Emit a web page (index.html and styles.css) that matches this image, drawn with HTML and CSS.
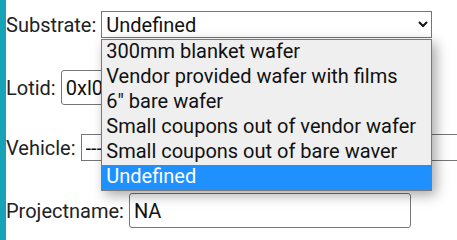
FILE: index.html
```html
<!DOCTYPE html>
<html lang="en">
<head>
<meta charset="utf-8">
<title>Sample form</title>
<link rel="stylesheet" href="styles.css">
</head>
<body>
<div class="page">
  <form class="form">
    <div class="row row-substrate">
      <label class="lbl" for="substrate">Substrate:</label>
      <div class="field">
        <select id="substrate" class="sel sel-substrate">
          <option>Undefined</option>
        </select>
        <ul class="dropdown">
          <li class="opt">300mm blanket wafer</li>
          <li class="opt">Vendor provided wafer with films</li>
          <li class="opt">6" bare wafer</li>
          <li class="opt">Small coupons out of vendor wafer</li>
          <li class="opt">Small coupons out of bare waver</li>
          <li class="opt opt-active">Undefined</li>
        </ul>
      </div>
    </div>
    <div class="row row-lotid">
      <label class="lbl" for="lotid">Lotid:</label>
      <input id="lotid" class="txt txt-lotid" type="text" value="0xl0">
    </div>
    <div class="row row-vehicle">
      <label class="lbl" for="vehicle">Vehicle:</label>
      <select id="vehicle" class="sel sel-vehicle">
        <option>---------</option>
      </select>
    </div>
    <div class="row row-project">
      <label class="lbl" for="project">Projectname:</label>
      <input id="project" class="txt txt-project" type="text" value="NA">
    </div>
  </form>
</div>
</body>
</html>
```

FILE: styles.css
```css
html, body {
  margin: 0;
  padding: 0;
  overflow: hidden;
  background: #ffffff;
}

.page {
  width: 100vw;
  height: 100vh;
  box-sizing: border-box;
  border-left: 6px solid #17a2b8;
  overflow: hidden;
  font-family: Roboto, "Liberation Sans", sans-serif;
  font-size: 20px;
  color: #222222;
}

.form {
  padding-top: 11px;
}

.row {
  display: flex;
  align-items: baseline;
  gap: 5px;
  white-space: nowrap;
}

.row-lotid { margin-top: 32px; }
.row-vehicle { margin-top: 29px; }
.row-project { margin-top: 32px; }

.lbl {
  flex: none;
}

.field {
  position: relative;
  flex: none;
  display: flex;
}

.sel {
  font-family: Roboto, "Liberation Sans", sans-serif;
  font-size: 20px;
  color: #111111;
  height: 27px;
  box-sizing: border-box;
  border: 1px solid #767676;
  border-radius: 0;
  background: #ffffff;
  flex: none;
}

.sel-substrate { width: 331px; }
.sel-vehicle { width: 420px; }

.txt {
  font-family: Roboto, "Liberation Sans", sans-serif;
  font-size: 20px;
  color: #111111;
  height: 35px;
  box-sizing: border-box;
  border: 1px solid #767676;
  border-radius: 3px;
  padding: 1px 4px;
  background: #ffffff;
  flex: none;
}

.txt-lotid { width: 282px; }
.txt-project { width: 282px; }

.dropdown {
  position: absolute;
  z-index: 10;
  top: calc(100% + 1px);
  left: 0;
  width: 100%;
  box-sizing: border-box;
  margin: 0;
  padding: 0;
  list-style: none;
  background: #efefef;
  border: 1px solid #7a7a7a;
  box-shadow: 4px 4px 12px rgba(0, 0, 0, 0.35);
}

.opt {
  height: 25px;
  line-height: 23px;
  padding: 0 4px;
  color: #111111;
}

.opt-active {
  background: #1e90ff;
  color: #ffffff;
}
```
